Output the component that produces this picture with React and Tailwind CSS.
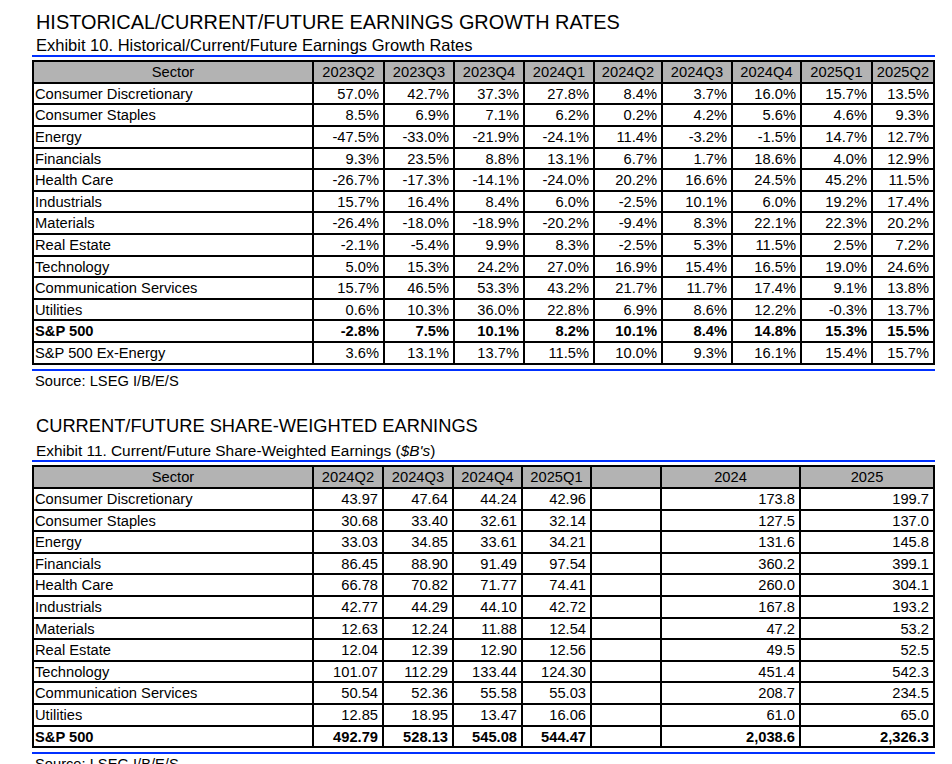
const growthCols = ["2023Q2", "2023Q3", "2023Q4", "2024Q1", "2024Q2", "2024Q3", "2024Q4", "2025Q1", "2025Q2"];

const growthRows = [
  ["Consumer Discretionary", "57.0%", "42.7%", "37.3%", "27.8%", "8.4%", "3.7%", "16.0%", "15.7%", "13.5%"],
  ["Consumer Staples", "8.5%", "6.9%", "7.1%", "6.2%", "0.2%", "4.2%", "5.6%", "4.6%", "9.3%"],
  ["Energy", "-47.5%", "-33.0%", "-21.9%", "-24.1%", "11.4%", "-3.2%", "-1.5%", "14.7%", "12.7%"],
  ["Financials", "9.3%", "23.5%", "8.8%", "13.1%", "6.7%", "1.7%", "18.6%", "4.0%", "12.9%"],
  ["Health Care", "-26.7%", "-17.3%", "-14.1%", "-24.0%", "20.2%", "16.6%", "24.5%", "45.2%", "11.5%"],
  ["Industrials", "15.7%", "16.4%", "8.4%", "6.0%", "-2.5%", "10.1%", "6.0%", "19.2%", "17.4%"],
  ["Materials", "-26.4%", "-18.0%", "-18.9%", "-20.2%", "-9.4%", "8.3%", "22.1%", "22.3%", "20.2%"],
  ["Real Estate", "-2.1%", "-5.4%", "9.9%", "8.3%", "-2.5%", "5.3%", "11.5%", "2.5%", "7.2%"],
  ["Technology", "5.0%", "15.3%", "24.2%", "27.0%", "16.9%", "15.4%", "16.5%", "19.0%", "24.6%"],
  ["Communication Services", "15.7%", "46.5%", "53.3%", "43.2%", "21.7%", "11.7%", "17.4%", "9.1%", "13.8%"],
  ["Utilities", "0.6%", "10.3%", "36.0%", "22.8%", "6.9%", "8.6%", "12.2%", "-0.3%", "13.7%"],
  ["S&P 500", "-2.8%", "7.5%", "10.1%", "8.2%", "10.1%", "8.4%", "14.8%", "15.3%", "15.5%"],
  ["S&P 500 Ex-Energy", "3.6%", "13.1%", "13.7%", "11.5%", "10.0%", "9.3%", "16.1%", "15.4%", "15.7%"],
];

const earningsCols = ["2024Q2", "2024Q3", "2024Q4", "2025Q1", "", "2024", "2025"];

const earningsRows = [
  ["Consumer Discretionary", "43.97", "47.64", "44.24", "42.96", "", "173.8", "199.7"],
  ["Consumer Staples", "30.68", "33.40", "32.61", "32.14", "", "127.5", "137.0"],
  ["Energy", "33.03", "34.85", "33.61", "34.21", "", "131.6", "145.8"],
  ["Financials", "86.45", "88.90", "91.49", "97.54", "", "360.2", "399.1"],
  ["Health Care", "66.78", "70.82", "71.77", "74.41", "", "260.0", "304.1"],
  ["Industrials", "42.77", "44.29", "44.10", "42.72", "", "167.8", "193.2"],
  ["Materials", "12.63", "12.24", "11.88", "12.54", "", "47.2", "53.2"],
  ["Real Estate", "12.04", "12.39", "12.90", "12.56", "", "49.5", "52.5"],
  ["Technology", "101.07", "112.29", "133.44", "124.30", "", "451.4", "542.3"],
  ["Communication Services", "50.54", "52.36", "55.58", "55.03", "", "208.7", "234.5"],
  ["Utilities", "12.85", "18.95", "13.47", "16.06", "", "61.0", "65.0"],
  ["S&P 500", "492.79", "528.13", "545.08", "544.47", "", "2,038.6", "2,326.3"],
];

// header / body cells share the same box: right + bottom border, fixed row height
const cellBase = "h-[21.6px] border-r-2 border-b-2 border-black leading-[21px] whitespace-nowrap overflow-hidden";

function DataTable({ gridClass, cols, rows }) {
  return (
    <div className={`mt-[3.3px] grid border-l-2 border-t-2 border-black ${gridClass}`}>
      <div className={`${cellBase} bg-[#b3b3b3] text-center`}>Sector</div>
      {cols.map((c, i) => (
        <div key={i} className={`${cellBase} bg-[#b3b3b3] text-center`}>
          {c}
        </div>
      ))}
      {rows.map((row) => {
        const bold = row[0] === "S&P 500";
        return row.map((v, i) => (
          <div
            key={row[0] + i}
            className={`${cellBase} ${i === 0 ? "pl-[1px] text-left" : "pr-[4px] text-right"} ${bold ? "font-bold" : ""}`}
          >
            {v}
          </div>
        ));
      })}
    </div>
  );
}

export default function App() {
  return (
    <div className="min-h-screen bg-white pl-8 text-black font-['Liberation_Sans',Arial,sans-serif] text-[14.7px]">
      <div className="w-[903px]">
        <div className="pt-[11.3px] pl-1 text-[19.9px] leading-[22px]">
          HISTORICAL/CURRENT/FUTURE EARNINGS GROWTH RATES
        </div>
        <div className="mt-[2.3px] pl-1 text-[16.5px] leading-[18px]">
          Exhibit 10. Historical/Current/Future Earnings Growth Rates
        </div>
        <div className="mt-[1.4px] h-[2px] bg-[#0030ff]" />
        <DataTable
          gridClass="grid-cols-[280px_71px_70px_70px_70px_68px_70px_69px_71px_62px]"
          cols={growthCols}
          rows={growthRows}
        />
        <div className="mt-[4px] h-[2px] bg-[#0030ff]" />
        <div className="mt-[2px] pl-[3px] leading-[17px]">Source: LSEG I/B/E/S</div>

        <div className="mt-[26px] pl-1 text-[18.3px] leading-[20px]">
          CURRENT/FUTURE SHARE-WEIGHTED EARNINGS
        </div>
        <div className="mt-[6.8px] pl-1 text-[15.4px] leading-[17px]">
          Exhibit 11. Current/Future Share-Weighted Earnings (<span className="italic">$B's</span>)
        </div>
        <div className="mt-[0.8px] h-[2px] bg-[#0030ff]" />
        <DataTable
          gridClass="grid-cols-[280px_70px_70px_69px_69px_70px_139px_134px]"
          cols={earningsCols}
          rows={earningsRows}
        />
        <div className="mt-[4px] h-[2px] bg-[#0030ff]" />
        <div className="mt-[2px] pl-[3px] pb-4 leading-[17px]">Source: LSEG I/B/E/S</div>
      </div>
    </div>
  );
}
